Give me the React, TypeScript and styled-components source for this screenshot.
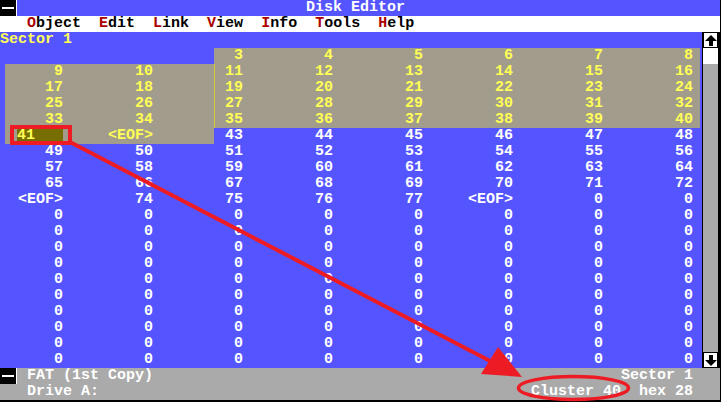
import React from 'react';
import styled, { createGlobalStyle } from 'styled-components';

const C = {
  blue: '#5555ff',
  yellow: '#ffff55',
  white: '#ffffff',
  sel: '#a29c8c',
  olive: '#766e00',
  gray: '#aaaaaa',
  hot: '#aa0000',
  black: '#000000',
  mark: '#d2c93c',
  anno: '#ed1c24',
};

const Global = createGlobalStyle`
  html, body { margin: 0; padding: 0; background: #000; }
  body { width: 721px; height: 402px; overflow: hidden; }
`;

const Screen = styled.div`
  position: relative;
  width: 720px;
  height: 400px;
  display: flex;
  flex-direction: column;
  background: ${C.blue};
  font-family: "Liberation Mono", "DejaVu Sans Mono", monospace;
  font-size: 15px;
  font-weight: bold;
  line-height: 16px;
  white-space: pre;
`;

const TitleBar = styled.div`
  display: flex;
  height: 16px;
  background: ${C.blue};
  color: ${C.white};
`;

const SysBox = styled.div`
  width: 16px;
  height: 16px;
  background: ${C.black};
  border-right: 1px solid ${C.white};
  display: flex;
  align-items: center;
  justify-content: center;
  flex: none;
  &::before {
    content: '';
    width: 12px;
    height: 2px;
    background: ${C.white};
  }
`;

const Title = styled.span`
  margin-left: 289px;
`;

const MenuBar = styled.div`
  display: flex;
  gap: 18px;
  height: 16px;
  padding-left: 27px;
  background: ${C.white};
  color: ${C.black};
`;

const MenuItem = styled.span`
  color: ${C.black};
`;

const Hot = styled.span`
  color: ${C.hot};
`;

const Main = styled.div`
  display: flex;
  height: 336px;
`;

const DataArea = styled.div`
  width: 702px;
  display: flex;
  flex-direction: column;
  background: ${C.blue};
`;

const SectorLabel = styled.div`
  height: 16px;
  color: ${C.yellow};
`;

const hlBackground = (hl?: [number, number], mark?: boolean) => {
  const layers: string[] = [];
  if (mark) layers.push(`linear-gradient(${C.mark}, ${C.mark}) 214px 0 / 1px 100% no-repeat`);
  if (hl) {
    layers.push(
      `linear-gradient(to right, ${C.blue} ${hl[0]}px, ${C.sel} ${hl[0]}px, ${C.sel} ${hl[1]}px, ${C.blue} ${hl[1]}px)`
    );
  } else {
    layers.push(C.blue);
  }
  return layers.join(', ');
};

const DataRow = styled.div<{ $hl?: [number, number]; $mark?: boolean }>`
  display: flex;
  height: 16px;
  background: ${({ $hl, $mark }) => hlBackground($hl, $mark)};
`;

const Cell = styled.span<{ $w: number; $sel: boolean }>`
  width: ${({ $w }) => $w}px;
  flex: none;
  text-align: right;
  color: ${({ $sel }) => ($sel ? C.yellow : C.white)};
`;

const EditField = styled.span`
  display: inline-block;
  vertical-align: top;
  width: 46px;
  height: 13px;
  margin-top: 1px;
  line-height: 14px;
  text-align: left;
  background: ${C.olive};
  color: ${C.yellow};
`;

const Scrollbar = styled.div`
  width: 18px;
  box-sizing: border-box;
  border-left: 1px solid ${C.black};
  border-right: 2px solid ${C.black};
  background: ${C.gray};
  display: flex;
  flex-direction: column;
  justify-content: space-between;
`;

const ScrollTop = styled.div`
  display: flex;
  flex-direction: column;
`;

const ArrowBtn = styled.div`
  height: 16px;
  box-sizing: border-box;
  border: 1px solid ${C.black};
  background: ${C.white};
  display: flex;
  align-items: center;
  justify-content: center;
`;

const Thumb = styled.div`
  height: 16px;
  background: ${C.white};
`;

const StatusBar = styled.div`
  display: flex;
  flex-direction: column;
  background: ${C.gray};
  color: ${C.white};
`;

const StatusRow = styled.div<{ $indent?: boolean }>`
  display: flex;
  justify-content: space-between;
  height: 16px;
  padding-left: ${({ $indent }) => ($indent ? '27px' : '0')};
  padding-right: 27px;
`;

const StatusLeft = styled.div`
  display: flex;
  gap: 10px;
`;

const Overlay = styled.svg`
  position: absolute;
  left: 0;
  top: 0;
  pointer-events: none;
`;

function valueOf(e: number): string {
  if (e < 2) return '';
  if (e <= 40) return String(e + 1);
  if (e === 41) return '<EOF>';
  if (e <= 71) return String(e + 1);
  if (e === 72 || e === 77) return '<EOF>';
  if (e <= 76) return String(e + 1);
  return '0';
}

const rowHl = (r: number): [number, number] | undefined => {
  if (r === 0) return [214, 700];
  if (r >= 1 && r <= 4) return [5, 700];
  if (r === 5) return [5, 214];
  return undefined;
};

const Arrow = ({ down }: { down?: boolean }) => (
  <svg width="12" height="11" viewBox="0 0 12 11" style={down ? { transform: 'rotate(180deg)' } : undefined}>
    <polygon points="6,0 12,6 0,6" fill="#000" />
    <rect x="4" y="6" width="4" height="5" fill="#000" />
  </svg>
);

const menus = ['Object', 'Edit', 'Link', 'View', 'Info', 'Tools', 'Help'];

export default function App() {
  const rows = Array.from({ length: 20 }, (_, r) => r);
  return (
    <>
      <Global />
      <Screen>
        <TitleBar>
          <SysBox />
          <Title>Disk Editor</Title>
        </TitleBar>
        <MenuBar>
          {menus.map((m) => (
            <MenuItem key={m}>
              <Hot>{m[0]}</Hot>
              {m.slice(1)}
            </MenuItem>
          ))}
        </MenuBar>
        <Main>
          <DataArea>
            <SectorLabel>Sector 1</SectorLabel>
            {rows.map((r) => (
              <DataRow key={r} $hl={rowHl(r)} $mark={r >= 1 && r <= 4}>
                {Array.from({ length: 8 }, (_, i) => {
                  const e = r * 8 + i;
                  const sel = e >= 2 && e <= 41;
                  return (
                    <Cell key={i} $w={i === 0 ? 63 : 90} $sel={sel}>
                      {e === 40 ? <EditField>41</EditField> : valueOf(e)}
                    </Cell>
                  );
                })}
              </DataRow>
            ))}
          </DataArea>
          <Scrollbar>
            <ScrollTop>
              <ArrowBtn>
                <Arrow />
              </ArrowBtn>
              <Thumb />
            </ScrollTop>
            <ArrowBtn>
              <Arrow down />
            </ArrowBtn>
          </Scrollbar>
        </Main>
        <StatusBar>
          <StatusRow>
            <StatusLeft>
              <SysBox />
              <span>FAT (1st Copy)</span>
            </StatusLeft>
            <span>Sector 1</span>
          </StatusRow>
          <StatusRow $indent>
            <span>Drive A:</span>
            <span>Cluster 40  hex 28</span>
          </StatusRow>
        </StatusBar>
        <Overlay width="721" height="402" viewBox="0 0 721 402">
          <rect x="12" y="127" width="58" height="16" fill="none" stroke={C.anno} strokeWidth="4" />
          <line x1="70" y1="142" x2="492" y2="362" stroke={C.anno} strokeWidth="4" />
          <polygon points="481,374 498,347 522,377" fill={C.anno} />
          <ellipse cx="573.5" cy="388" rx="55" ry="11.5" fill="none" stroke={C.anno} strokeWidth="3.5" />
        </Overlay>
      </Screen>
    </>
  );
}
